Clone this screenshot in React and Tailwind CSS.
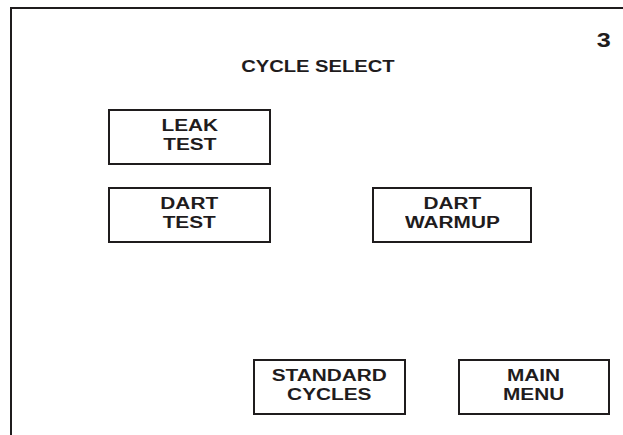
// CycleSelect screen – panel with cycle buttons
const ink = "border-[#1f1c1d]";

function PanelButton({ lines, className = "" }) {
  return (
    <div
      className={`flex h-[56px] items-center justify-center border-2 ${ink} bg-white pb-[2px] ${className}`}
    >
      <div className="flex scale-x-[1.3] flex-col items-center text-[16px] font-bold leading-[18.5px] text-[#1f1c1d]">
        {lines.map((l) => (
          <span key={l}>{l}</span>
        ))}
      </div>
    </div>
  );
}

export default function App() {
  return (
    <div
      className="h-[435px] w-[623px] overflow-hidden bg-white text-[#1f1c1d]"
      style={{ fontFamily: '"Liberation Sans", Arial, Helvetica, sans-serif' }}
    >
      <div className={`ml-[10px] mt-[7px] h-[428px] border-l-2 border-t-2 ${ink}`}>
        <div className="flex justify-end pr-[13px] pt-[20px]">
          <span className="scale-x-[1.2] text-[21px] font-bold leading-[22px]">3</span>
        </div>

        <div className="mt-[7px] flex justify-center">
          <span className="scale-x-[1.26] text-[16px] font-bold leading-[18.5px]">
            CYCLE SELECT
          </span>
        </div>

        <div className="ml-[96px] mt-[32px]">
          <PanelButton lines={["LEAK", "TEST"]} className="w-[163px]" />
        </div>

        <div className="ml-[96px] mt-[22px] flex gap-[101px]">
          <PanelButton lines={["DART", "TEST"]} className="w-[163px]" />
          <PanelButton lines={["DART", "WARMUP"]} className="w-[160px]" />
        </div>

        <div className="ml-[241px] mt-[116px] flex gap-[52px]">
          <PanelButton lines={["STANDARD", "CYCLES"]} className="w-[153px]" />
          <PanelButton lines={["MAIN", "MENU"]} className="w-[152px]" />
        </div>
      </div>
    </div>
  );
}
